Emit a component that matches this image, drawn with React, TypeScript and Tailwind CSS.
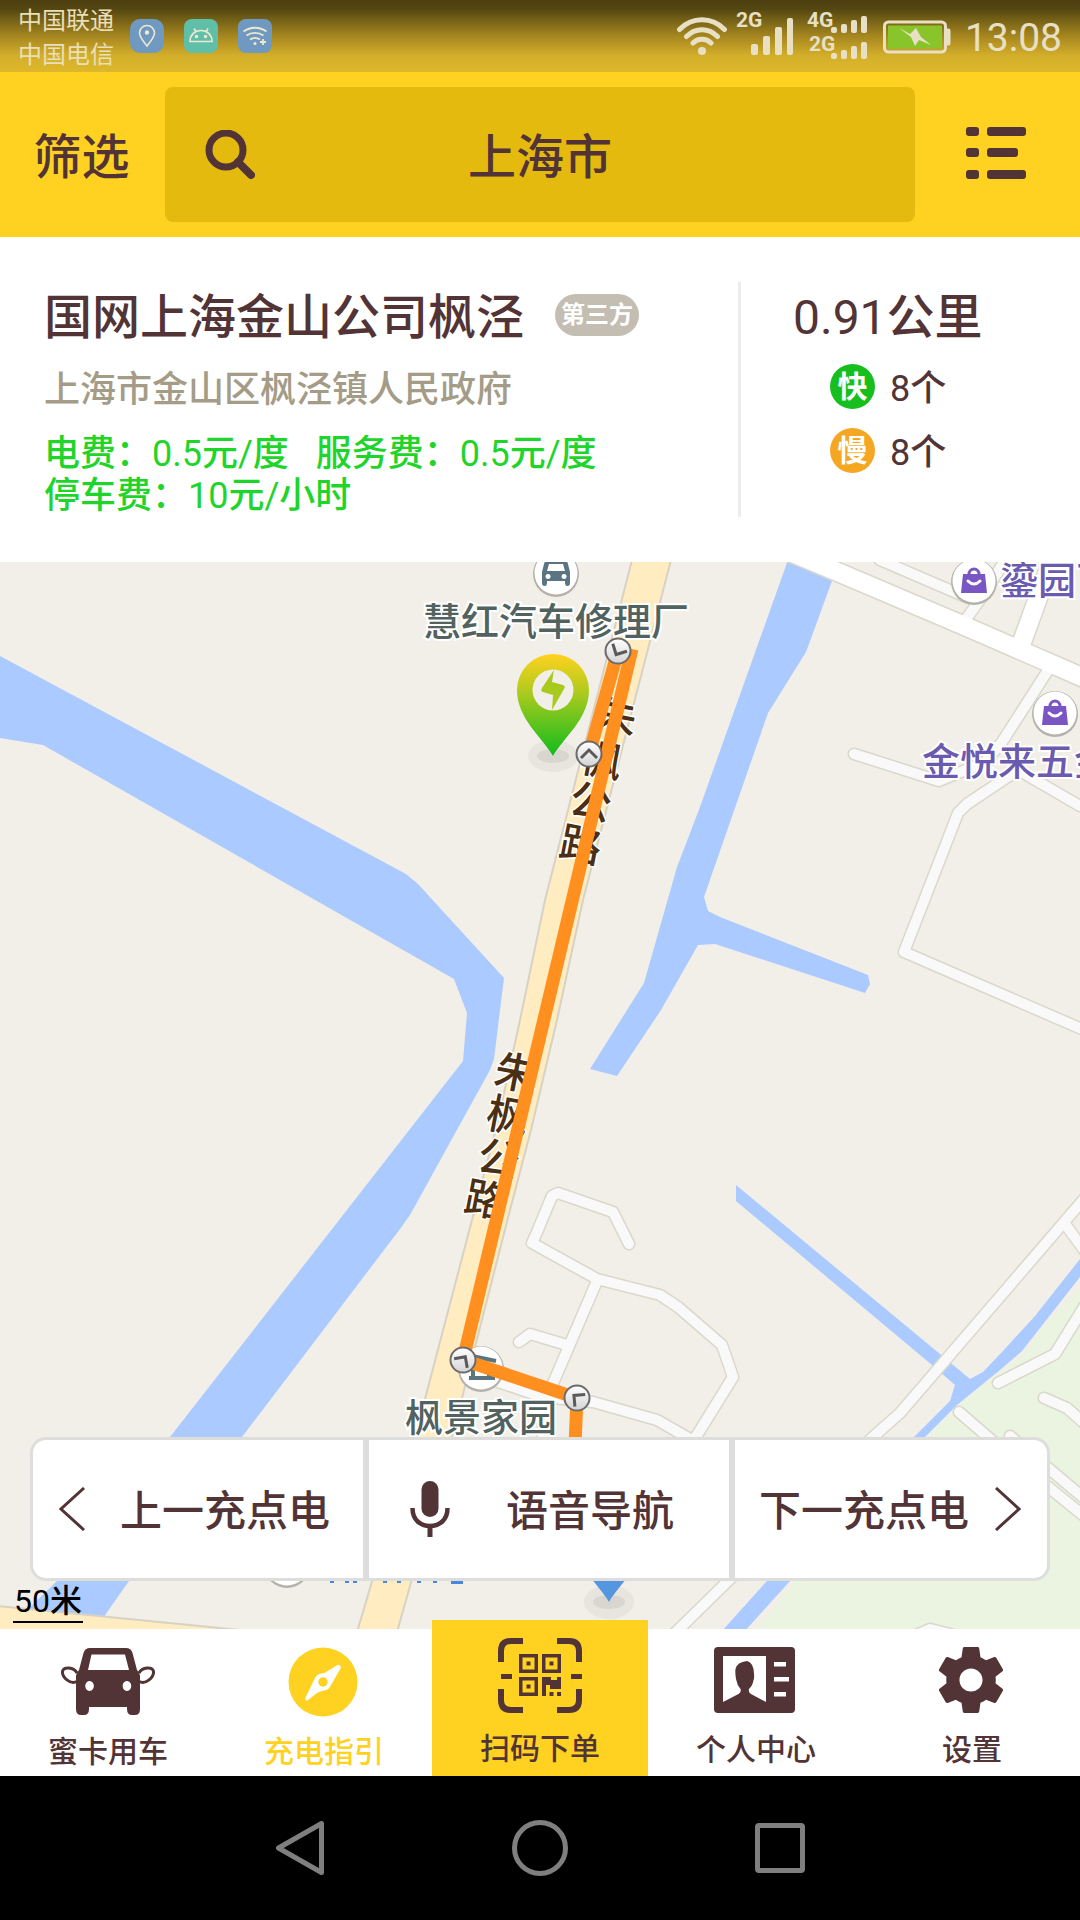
import React from "react";

const BROWN = "#523437";

function StatusBar() {
  return (
    <div className="flex h-[72px] items-center justify-between bg-[linear-gradient(#4d4010_0%,#534611_12%,#a5861f_50%,#d3ae2a_77%,#ddb82c_100%)] px-[18px] text-[#e8e0c4]">
      <div className="flex items-center gap-4">
        <div className="pt-1 text-[24px] leading-[34px] text-[#e9dfb8]">
          <p>中国联通</p>
          <p>中国电信</p>
        </div>
        <div className="flex gap-5">
          <svg viewBox="0 0 34 34" className="size-[34px] rounded-[10px] bg-[#7099c2]" fill="none" stroke="#efe8cf" strokeWidth="1.6">
            <path d="M17 27c-4-5-7.500-9-7.500-13a7.500 7.500 0 0 1 15 0c0 4-3.500 8-7.500 13z" />
            <circle cx="17" cy="13.500" r="1.400" fill="#efe8cf" />
          </svg>
          <svg viewBox="0 0 34 34" className="size-[34px] rounded-lg bg-[#60bfa8]" fill="none" stroke="#efe8cf" strokeWidth="1.600">
            <path d="M6 22.500c0-6.500 4.500-11 11-11s11 4.500 11 11zM12 12.500l-2-3M22 12.500l2-3" />
            <circle cx="12.500" cy="17.500" r="1" fill="#efe8cf" />
            <circle cx="21.500" cy="17.500" r="1" fill="#efe8cf" />
          </svg>
          <svg viewBox="0 0 34 34" className="size-[34px] rounded-lg bg-[#7099c2]" fill="none" stroke="#efe8cf" strokeWidth="1.800">
            <path d="M5.500 12.500c7-5 16-5 23 0M8.500 16.500c5-3.500 12-3.500 17 0M12 20.500c3-2 7-2 10 0" />
            <circle cx="17" cy="24.500" r="1.500" fill="#efe8cf" stroke="none" />
            <path d="M25 20v6M22 23h6" />
          </svg>
        </div>
      </div>
      <div className="flex items-center">
        <svg viewBox="0 0 50 38" className="h-[38px] w-[50px]" fill="none" stroke="currentColor" strokeWidth="5" strokeLinecap="round">
          <path d="M2.500 12.500C15-.5 35-.5 47.500 12.500M9.500 19.500c9-9 22-9 31 0M16 26c5-5 13-5 18 0" />
          <circle cx="25" cy="34" r="4" fill="currentColor" stroke="none" />
        </svg>
        <svg viewBox="0 0 60 60" className="ml-2 h-[60px] w-[60px]" fill="currentColor">
          <text x="1" y="21" fontSize="21" fontWeight="700">2G</text>
          <rect x="16" y="38" width="7" height="11" rx="2" />
          <rect x="28" y="30" width="7" height="19" rx="2" />
          <rect x="40" y="21" width="7" height="28" rx="2" />
          <rect x="52" y="12" width="6" height="37" rx="2" />
        </svg>
        <svg viewBox="0 0 62 60" className="ml-3 h-[60px] w-[62px]" fill="currentColor">
          <text x="0" y="21" fontSize="21" fontWeight="700">4G</text>
          <text x="2" y="45" fontSize="21" fontWeight="700">2G</text>
          <rect x="24" y="21" width="6" height="6" rx="2" />
          <rect x="34" y="18" width="6" height="9" rx="2" />
          <rect x="44" y="14" width="6" height="13" rx="2" />
          <rect x="54" y="10" width="6" height="17" rx="2" />
          <rect x="24" y="47" width="6" height="6" rx="2" />
          <rect x="34" y="44" width="6" height="9" rx="2" />
          <rect x="44" y="40" width="6" height="13" rx="2" />
          <rect x="54" y="36" width="6" height="17" rx="2" />
        </svg>
        <svg viewBox="0 0 68 34" className="mt-[2px] ml-[14px] h-[34px] w-[68px]">
          <rect x="1.500" y="2" width="61" height="30" rx="4" fill="none" stroke="currentColor" strokeWidth="3" />
          <rect x="5" y="5.500" width="54" height="23" fill="#89c42a" />
          <path d="M64 8.500h1.500a2 2 0 0 1 2 2v13a2 2 0 0 1-2 2H64z" fill="currentColor" />
          <path d="M16 8l11 6 6-6 5 9 10 8-12-5-4 6-4-9z" fill="currentColor" />
        </svg>
        <span className="ml-[14px] pt-1 text-[39px] leading-[48px]">13:08</span>
      </div>
    </div>
  );
}

function Header() {
  return (
    <header className="flex items-stretch bg-[#ffd221] py-[15px] text-[#523437]">
      <button type="button" className="w-[165px] pt-[6px] pr-[2px] text-[48px] leading-[56px] font-medium">筛选</button>
      <div className="flex h-[135px] min-w-0 flex-1 items-center rounded-lg bg-[#e5ba0e] px-10">
        <svg viewBox="0 0 50 50" className="size-[50px] shrink-0" fill="none" stroke={BROWN} strokeWidth="7">
          <circle cx="21" cy="20" r="17" />
          <path d="M33 32l13 13" strokeWidth="8" strokeLinecap="round" />
        </svg>
        <input
          type="text"
          aria-label="城市"
          defaultValue="上海市"
          className="mr-[50px] h-[80px] min-w-0 flex-1 bg-transparent pb-1 text-center text-[48px] font-medium outline-none"
        />
      </div>
      <button type="button" aria-label="列表" className="flex w-[165px] items-center pb-[3px] pl-[51px]">
        <svg viewBox="0 0 60 52" className="h-[52px] w-[60px] shrink-0" fill={BROWN}>
          <rect x="0" y="0" width="13" height="9" rx="3" />
          <rect x="0" y="21" width="13" height="9" rx="3" />
          <rect x="0" y="43" width="13" height="9" rx="3" />
          <rect x="21" y="0" width="39" height="9" rx="3" />
          <rect x="21" y="21" width="31" height="9" rx="3" />
          <rect x="21" y="43" width="39" height="9" rx="3" />
        </svg>
      </button>
    </header>
  );
}

function Num({ children }: { children: string }) {
  return <span className="font-normal">{children}</span>;
}

function StationCard() {
  return (
    <section className="flex bg-white py-[45px] pl-11 font-medium text-[#523437]">
      <div className="min-w-0 flex-1 pt-2">
        <div className="flex items-center gap-[31px]">
          <h1 className="text-[48px] leading-[56px]">国网上海金山公司枫泾</h1>
          <span className="mb-[6px] flex h-[42px] w-[84px] items-center justify-center rounded-full bg-[#c4beb2] text-[24px] leading-[30px] font-bold text-white">第三方</span>
        </div>
        <p className="mt-[23px] text-[36px] leading-[42px] text-[#a49c87]">上海市金山区枫泾镇人民政府</p>
        <p className="mt-[22px] text-[36px] leading-[42px] whitespace-pre text-[#1fd52b]">
          电费：<Num>0.5</Num>元<Num>/</Num>度<Num>{"   "}</Num>服务费：<Num>0.5</Num>元<Num>/</Num>度
        </p>
        <p className="text-[36px] leading-[42px] text-[#1fd52b]">
          停车费：<Num>10</Num>元<Num>/</Num>小时
        </p>
      </div>
      <div className="w-[342px] border-l-[3px] border-[#ededed] pt-2 pl-[52px]">
        <p className="text-[48px] leading-[56px]"><Num>0.91</Num>公里</p>
        <ul className="mt-[18px] flex flex-col gap-4 pl-[37px] text-[36px] leading-[45px]">
          <li className="flex items-start gap-[15px]">
            <span className="flex size-[45px] items-center justify-center rounded-full bg-[#16bf1e] text-[30px] font-bold text-white">快</span>
            <span className="pt-[3px]"><Num>8</Num>个</span>
          </li>
          <li className="flex items-start gap-[15px]">
            <span className="flex size-[45px] items-center justify-center rounded-full bg-[#f5a623] text-[30px] font-bold text-white">慢</span>
            <span className="pt-[3px]"><Num>8</Num>个</span>
          </li>
        </ul>
      </div>
    </section>
  );
}

const lanes = [
  "M854 754L939 781L985 762L1002 742L1052 664",
  "M1080 806L1018 770L967 804L958 813L904 952L1084 1030",
  "M880 560L966 597L985 590M964 622L984 594L1004 562",
  "M629 1244L613 1212L558 1193L552 1196L537 1232L532 1243L597 1279L660 1295L678 1307L722 1345L733 1377L694 1440",
  "M597 1281L551 1388",
  "M519 1342L530 1334L567 1345",
  "M480 1376L543 1397L593 1402L657 1420L692 1440M543 1400L543 1445",
  "M1084 1199L900 1413L873 1437L728 1581L675 1633M1065 1224L1084 1250",
  "M998 1383L1055 1354L1084 1307",
  "M1044 1398L1067 1408L1084 1423",
  "M959 1412L1010 1456L1084 1516M1010 1436L1084 1498",
  "M905 1640L930 1629L950 1634",
];

const northLabel = [
  { ch: "朱", x: 616, y: 716 },
  { ch: "枫", x: 602, y: 759 },
  { ch: "公", x: 591, y: 801 },
  { ch: "路", x: 581, y: 844 },
];
const southLabel = [
  { ch: "朱", x: 516, y: 1072 },
  { ch: "枫", x: 508, y: 1115 },
  { ch: "公", x: 499, y: 1158 },
  { ch: "路", x: 486, y: 1199 },
];
const waypoints = [
  { x: 618, y: 651, r: 208 },
  { x: 589, y: 754, r: 0 },
  { x: 463, y: 1360, r: 35 },
  { x: 577, y: 1398, r: -50 },
];

function Bag({ x, y }: { x: number; y: number }) {
  return (
    <g transform={`translate(${x} ${y})`}>
      <circle r="23" cy="1" fill="#b5b2ab" />
      <circle r="21.500" fill="#fff" />
      <path d="M-11-7h22l2 19h-26z" fill="#7a55c4" />
      <path d="M-5-7a5 5 0 0 1 10 0" fill="none" stroke="#7a55c4" strokeWidth="3" />
      <path d="M-6 0q6 6 12 0" fill="none" stroke="#fff" strokeWidth="3" strokeLinecap="round" />
    </g>
  );
}

function MapDrawing() {
  return (
    <svg viewBox="0 562 1080 1067" preserveAspectRatio="xMidYMid slice" className="absolute inset-0 size-full" role="img" aria-label="地图">
      <defs>
        <linearGradient id="pin" x1="0" y1="0" x2="0" y2="1">
          <stop offset="0" stopColor="#ffd21f" />
          <stop offset="0.350" stopColor="#b4cb1e" />
          <stop offset="1" stopColor="#10bb1c" />
        </linearGradient>
        <linearGradient id="node" x1="0" y1="0" x2="0" y2="1">
          <stop offset="0" stopColor="#ffffff" />
          <stop offset="1" stopColor="#d4d4d4" />
        </linearGradient>
      </defs>
      <rect x="0" y="562" width="1080" height="1067" fill="#f2efe8" />
      <path d="M1080 1288L1045 1325L1025 1353L957 1407L927 1437L795 1581L758 1629H1080z" fill="#eaf4e1" />
      <g fill="#abcaff">
        <path d="M0 656L406 874L418 884L504 978L494 1059L490 1070L410 1215L400 1229L242 1437L129 1581L103 1618L25 1612L57 1581L170 1437L463 1061L467 1013L454 979L43 745L0 738z" />
        <path d="M788 560L832 581L806 652L768 713L704 897L708 911L720 917L868 975L870 984L865 993L715 944L698 945L661 1010L617 1076L590 1069L644 983L677 867L700 807z" />
        <path d="M736 1185L940 1354L970 1379L983 1372L1002 1352L1035 1316L1080 1259V1277L1022 1351L1000 1370L957 1405L925 1437L790 1581L744 1632H721L767 1581L914 1437L950 1401L955 1385L932 1365L736 1201z" />
      </g>
      <g fill="none" strokeLinejoin="round" strokeLinecap="round">
        <path d="M766 542L840 573L960 624L1084 678M1022 642L1038 598L1056 550" stroke="#dad8cb" strokeWidth="21" />
        {lanes.map((d) => (
          <path key={d} d={d} stroke="#dad8cb" strokeWidth="13" />
        ))}
        {lanes.map((d) => (
          <path key={d} d={d} stroke="#f9f9f9" strokeWidth="10" />
        ))}
        <path d="M766 542L840 573L960 624L1084 678M1022 642L1038 598L1056 550" stroke="#ffffff" strokeWidth="18" />
      </g>
      <path d="M632 560L545 900L520 1020L497 1125L472 1220L415 1437L357 1632H397L452 1437L510 1210L531 1130L557 1020L583 900L671 560z" fill="#ffecc0" stroke="#d8d2c4" strokeWidth="2" />
      <path d="M-3 1606L240 1630L-3 1640z" fill="#ffecc0" stroke="#d8d2c4" strokeWidth="2" />

      <g fill="#4a2f14" stroke="#fff" strokeWidth="3" paintOrder="stroke" fontSize="42" fontWeight="500" textAnchor="middle">
        {northLabel.map((g) => (
          <text key={g.y} transform={`translate(${g.x} ${g.y}) rotate(11)`} y="16">{g.ch}</text>
        ))}
        {southLabel.map((g) => (
          <text key={g.y} transform={`translate(${g.x} ${g.y}) rotate(11)`} y="16">{g.ch}</text>
        ))}
      </g>

      <g transform="translate(481 1368)">
        <circle r="23" cy="1" fill="#b5b2ab" />
        <circle r="21.500" fill="#fff" />
        <path d="M-9-12L15-7M-12 10H14M-8-6V10M8-4V10" stroke="#5b7482" strokeWidth="4" fill="none" />
      </g>
      <g transform="translate(556 573)">
        <circle r="23" cy="1" fill="#b5b2ab" />
        <circle r="21.500" fill="#fff" />
        <path fillRule="evenodd" d="M-8-13H8q3 0 4 4l2 8v11q0 3-2.500 3T9 10V8H-9v2q0 3-2.500 3T-14 10V-1l2-8q1-4 4-4zM-7-9l-2 7H9L7-9zM-8 1a2.500 2.500 0 1 0 .1 0zM8 1a2.500 2.500 0 1 0 .1 0z" fill="#5b7482" />
      </g>
      <Bag x={974} y={581} />
      <Bag x={1055} y={713} />
      <circle cx="287" cy="1565" r="23" fill="#b5b2ab" />
      <circle cx="287" cy="1564" r="21.500" fill="#fff" />
      <path d="M332 1560v23M347 1560v23M355 1560v23M385 1560v23M399 1560v23M419 1560v23M435 1560v23M451 1582h12" stroke="#4a86e0" strokeWidth="4" />

      <g fontSize="38" fontWeight="500" paintOrder="stroke" stroke="#fff" strokeWidth="4">
        <text x="423" y="635" fill="#52635f">慧红汽车修理厂</text>
        <text x="405" y="1431" fill="#52635f">枫景家园</text>
        <g fill="#6a5ab0">
          <text x="1000" y="594">鎏园百</text>
          <text x="922" y="775">金悦来五金</text>
        </g>
      </g>

      <ellipse cx="553" cy="756" rx="25" ry="16" fill="#e7e5de" />
      <ellipse cx="553" cy="756" rx="16" ry="7" fill="#d9d6cf" />
      <path d="M553 756C543 738 517 719 517 690a36 36 0 0 1 72 0C589 719 563 738 553 756z" fill="url(#pin)" />
      <circle cx="553" cy="690" r="20.500" fill="#f2efe8" />
      <path d="M554 670L542 688q-2 3 1 4l10 3-1 15 12-21q2-3-1-4l-11-3z" fill="#a8ca1e" />

      <ellipse cx="609" cy="1602" rx="25" ry="17" fill="#e7e5de" />
      <ellipse cx="609" cy="1602" rx="16" ry="7" fill="#d9d6cf" />
      <path d="M609 1602C599 1584 573 1565 573 1536a36 36 0 0 1 72 0C645 1565 619 1584 609 1602z" fill="#5596e0" />

      <path d="M589 754L618 651M632 649L463 1360L577 1398L575 1445" fill="none" stroke="#ff9020" strokeWidth="13" />
      {waypoints.map((n) => (
        <g key={n.y} transform={`translate(${n.x} ${n.y})`}>
          <circle r="12.500" fill="url(#node)" stroke="#6b6b6b" strokeWidth="2" />
          <path d="M-8 4L0-4L8 4" transform={`rotate(${n.r})`} fill="none" stroke="#5a5a5a" strokeWidth="3" />
        </g>
      ))}
    </svg>
  );
}

function MapArea() {
  return (
    <main className="relative min-h-[600px] flex-1 overflow-hidden bg-[#f2efe8]">
      <MapDrawing />
      <div className="absolute inset-x-[30px] bottom-12 grid h-36 grid-cols-[330fr_360fr_312fr] gap-[6px] overflow-hidden rounded-[16px] border-[3px] border-[#dddddb] bg-[#dddddb] text-[42px] leading-[50px] font-medium text-[#523437]">
        <button type="button" className="flex items-center justify-between bg-white pl-[26px] pr-[33px]">
          <svg viewBox="0 0 26 44" className="h-[44px] w-[26px]" fill="none" stroke={BROWN} strokeWidth="3">
            <path d="M25 1L2 22L25 43" />
          </svg>
          <span className="pt-[5px]">上一充点电</span>
        </button>
        <button type="button" className="flex items-center gap-[56px] bg-white pl-[41px]">
          <svg viewBox="0 0 40 56" className="h-[56px] w-[40px]" fill={BROWN}>
            <rect x="11.500" y="0" width="17" height="36" rx="8.500" />
            <path d="M2.500 27c0 12 8 18 17.500 18s17.500-6 17.500-18" fill="none" stroke={BROWN} strokeWidth="4.500" />
            <rect x="17.500" y="44" width="5" height="12" />
          </svg>
          <span className="pt-[5px]">语音导航</span>
        </button>
        <button type="button" className="flex items-center justify-between bg-white pl-6 pr-[26px]">
          <span className="pt-[5px]">下一充点电</span>
          <svg viewBox="0 0 26 44" className="h-[44px] w-[26px]" fill="none" stroke={BROWN} strokeWidth="3">
            <path d="M1 1L24 22L1 43" />
          </svg>
        </button>
      </div>
      <div className="absolute bottom-[6px] left-[13px] w-[70px] border-b-2 border-black pt-1 text-center text-[32px] leading-[40px] font-medium text-black">
        <Num>50</Num>米
      </div>
    </main>
  );
}

function TabBar() {
  return (
    <nav className="relative flex h-[147px] items-end bg-white text-[30px] leading-[36px] font-medium text-[#523437]">
      <a href="#car" className="flex h-[147px] flex-1 flex-col items-center justify-between pt-[18px] pb-[6px]">
        <svg viewBox="0 0 94 68" className="h-[68px] w-[94px]" fill={BROWN}>
          <path fillRule="evenodd" d="M29 1H65q5 0 6.500 5L76 23q3 3 3 6v33q0 6-5 6h-3q-5 0-5-6v-2H28v2q0 6-5 6h-3q-5 0-5-6V29q0-3 3-6L22.500 6Q24 1 29 1zM30.500 7.500L27 23H68L64 7.500zM28.500 34a4.300 5 0 1 0 .1 0zM65.900 34a4.300 5 0 1 0 .1 0z" />
          <path d="M16 26c-3-6-14-7-14.500-1.500S9 38 16 34.500M78 26c3-6 14-7 14.500-1.500S85 38 78 34.500" fill="none" stroke={BROWN} strokeWidth="3" />
        </svg>
        <span>蜜卡用车</span>
      </a>
      <a href="#charge" className="flex h-[147px] flex-1 flex-col items-center justify-between pt-[18px] pb-[6px] text-[#ffd221]">
        <svg viewBox="0 0 70 70" className="mr-[2px] size-[70px]">
          <circle cx="35" cy="35" r="34.500" fill="#ffd221" />
          <path d="M52 18.500q1.500 1 .5 3L43 38q-2 5-7 5.500-4 .5-7 2.500l-9 7q-2 1-2.500 0t0-2.500L26.500 32q2-5 7-5.500 4-.5 7-3l9-5.500q1.500-.8 2.500.5z" fill="#fff" />
          <circle cx="35" cy="35" r="4.700" fill="#ffd221" />
        </svg>
        <span>充电指引</span>
      </a>
      <a href="#scan" className="flex h-[156px] flex-1 flex-col items-center justify-between bg-[#ffd221] pt-[18px] pb-[9px]">
        <svg viewBox="0 0 84 75" className="h-[75px] w-[84px]" fill={BROWN}>
          <path d="M25 3H13Q3 3 3 13V24M59 3H71Q81 3 81 13V24M25 72H13Q3 72 3 62V51M59 72H71Q81 72 81 62V51" fill="none" stroke={BROWN} strokeWidth="6" />
          <path d="M3 36h11v5H3zM73 36h11v5H73z" />
          <path fillRule="evenodd" d="M21 16h19v19H21zm3.500 3.500v12h12v-12zM28.500 23.500h4v4h-4zM21 39h19v19H21zm3.500 3.500v12h12v-12zM28.500 46.500h4v4h-4zM44 16h19v19H44zm3.500 3.500v12h12v-12zM51.500 23.500h4v4h-4z" />
          <path d="M44 39h9v3h6v-3h4v12H52v-4h-4v11h-4zM51.500 54h4v4h-4zM59 54h4v4h-4z" />
        </svg>
        <span>扫码下单</span>
      </a>
      <a href="#me" className="flex h-[147px] flex-1 flex-col items-center justify-between pt-[18px] pb-2">
        <svg viewBox="0 0 81 66" className="mr-1 h-[66px] w-[81px]">
          <rect width="81" height="66" rx="4" fill={BROWN} />
          <path d="M9 9H52V55L37 47q-3-2-2-5 4-4 4.500-9 1-2 .5-6 0-11-7-13-10 1-11.500 8-.5 4 .5 10 1 6 4.500 10 1 3-2 5L9 55z" fill="#fff" />
          <path d="M60 15h12v4.500H60zM60 30h15v4.500H60zM60 45h12v4.500H60z" fill="#fff" />
        </svg>
        <span>个人中心</span>
      </a>
      <a href="#settings" className="flex h-[147px] flex-1 flex-col items-center justify-between pt-[18px] pb-2">
        <svg viewBox="2 2 20 20" className="mr-[3px] size-[66px]" fill={BROWN}>
          <path d="M19.43 12.98c.04-.32.07-.64.07-.98s-.03-.66-.07-.98l2.110-1.650c.19-.15.24-.42.12-.64l-2-3.460c-.12-.22-.39-.3-.61-.22l-2.490 1c-.52-.4-1.080-.73-1.690-.98l-.38-2.650C14.460 2.180 14.250 2 14 2h-4c-.25 0-.46.18-.49.42l-.38 2.650c-.61.25-1.170.59-1.690.98l-2.490-1c-.23-.09-.49 0-.61.22l-2 3.460c-.13.22-.07.49.12.64l2.110 1.650c-.04.32-.07.65-.07.98s.03.66.07.98l-2.110 1.650c-.19.15-.24.42-.12.64l2 3.460c.12.22.39.3.61.22l2.490-1c.52.4 1.080.73 1.690.98l.38 2.650c.03.24.24.42.49.42h4c.25 0 .46-.18.49-.42l.38-2.650c.61-.25 1.170-.59 1.690-.98l2.490 1c.23.09.49 0 .61-.22l2-3.460c.12-.22.07-.49-.12-.64l-2.110-1.650zM12 15.500c-1.930 0-3.500-1.570-3.500-3.500s1.570-3.500 3.500-3.500 3.500 1.570 3.500 3.500-1.570 3.500-3.500 3.500z" />
        </svg>
        <span>设置</span>
      </a>
    </nav>
  );
}

function SystemNav() {
  return (
    <div className="grid h-36 grid-cols-3 bg-black px-[180px]">
      <button type="button" aria-label="返回" className="flex items-center justify-center">
        <svg viewBox="0 0 48 56" className="h-[56px] w-[48px]" fill="none" stroke="#7f7f7f" strokeWidth="5" strokeLinejoin="round">
          <path d="M45.500 3.500V52.500L2.500 28z" />
        </svg>
      </button>
      <button type="button" aria-label="主页" className="flex items-center justify-center">
        <svg viewBox="0 0 56 56" className="size-[56px]" fill="none" stroke="#7f7f7f" strokeWidth="5">
          <circle cx="28" cy="28" r="25.500" />
        </svg>
      </button>
      <button type="button" aria-label="最近任务" className="flex items-center justify-center">
        <svg viewBox="0 0 50 50" className="size-[50px]" fill="none" stroke="#7f7f7f" strokeWidth="5">
          <rect x="2.500" y="2.500" width="45" height="45" rx="1.500" />
        </svg>
      </button>
    </div>
  );
}

export default function App() {
  return (
    <div className="flex min-h-screen flex-col bg-white font-[Roboto,'Noto_Sans_CJK_SC',sans-serif]" lang="zh-CN">
      <StatusBar />
      <Header />
      <StationCard />
      <MapArea />
      <TabBar />
      <SystemNav />
    </div>
  );
}
